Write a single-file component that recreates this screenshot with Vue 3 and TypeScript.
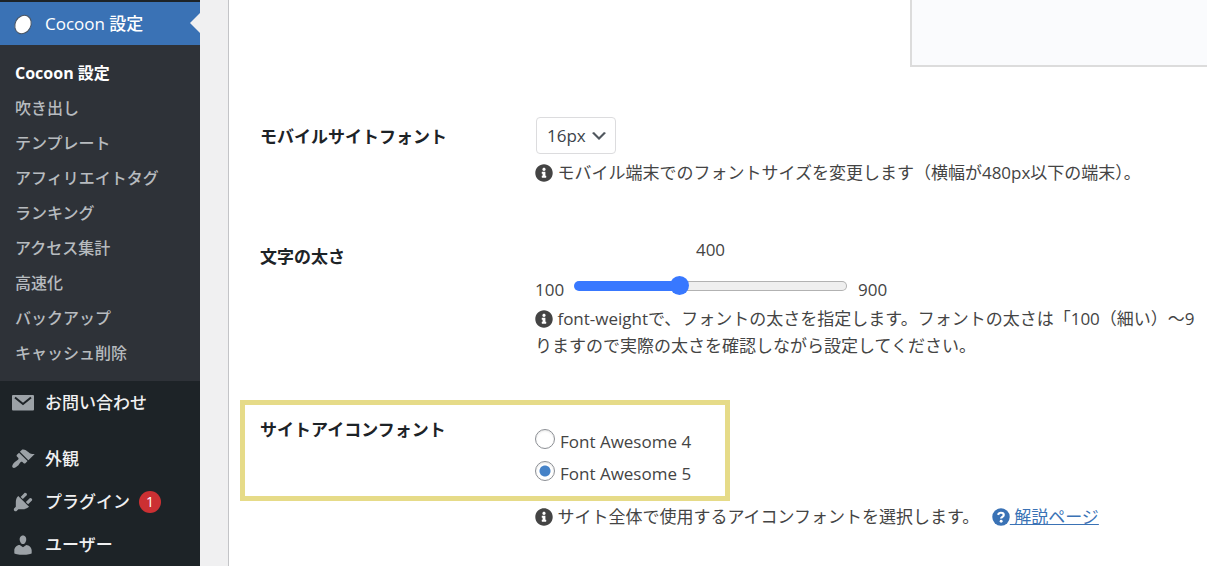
<script setup lang="ts">
import { computed, ref } from 'vue'

const submenu: string[] = [
  'Cocoon 設定',
  '吹き出し',
  'テンプレート',
  'アフィリエイトタグ',
  'ランキング',
  'アクセス集計',
  '高速化',
  'バックアップ',
  'キャッシュ削除',
]

const infoPath =
  'M256 8C119 8 8 119 8 256c0 137 111 248 248 248s248-111 248-248C504 119 393 8 256 8zm0 98c26 0 46 20 46 46s-20 46-46 46-46-20-46-46 20-46 46-46zm64 274c0 7-5 12-12 12H204c-7 0-12-5-12-12v-34c0-7 5-12 12-12h12v-54h-12c-7 0-12-5-12-12v-34c0-7 5-12 12-12h80c7 0 12 5 12 12v100h12c7 0 12 5 12 12z'

const fontSize = ref('16px')
const weight = ref(400)
const iconFont = ref('5')
const fill = computed(() => `${((weight.value - 100) / 800) * 100}%`)
</script>

<template>
  <div class="admin">
    <nav class="sidebar">
      <a class="item current" href="#cocoon">
        <svg class="icon" viewBox="0 0 24 24" aria-hidden="true">
          <ellipse cx="12" cy="12.5" rx="7.8" ry="9.6" transform="rotate(28 12 12.5)" fill="#fff" stroke="#4a5563" stroke-width="1" />
        </svg>
        <span>Cocoon 設定</span>
      </a>
      <ul class="submenu">
        <li v-for="(name, i) in submenu" :key="name">
          <a href="#sub" :class="{ active: i === 0 }">{{ name }}</a>
        </li>
      </ul>
      <a class="item" href="#contact">
        <svg class="icon" viewBox="0 0 24 24" aria-hidden="true">
          <rect x="1" y="4" width="22" height="15.5" rx="1" fill="#9ca2a7" />
          <path d="M4 6.500 12 13l8-6.500" fill="none" stroke="#1d2327" stroke-width="2" />
        </svg>
        <span>お問い合わせ</span>
      </a>
      <a class="item separated" href="#appearance">
        <svg class="icon" viewBox="0 0 20 20" aria-hidden="true">
          <path fill="#9ca2a7" d="M14.480 11.060 7.410 3.990l1.500-1.500c.5-.56 2.300-.47 3.510.32 1.210.8 1.430 1.280 2.910 2.100 1.180.64 2.450 1.260 4.450.85zm-.71.710L6.700 4.700 4.930 6.470c-.39.39-.39 1.020 0 1.410l1.060 1.060c.39.39.39 1.030 0 1.420-.6.600-1.430 1.110-2.210 1.690-.35.26-.7.530-1.010.840C1.430 14.230.4 16.080 1.400 17.070c.99 1 2.840-.030 4.180-1.360.31-.31.58-.66.850-1.020.57-.78 1.080-1.610 1.690-2.210.39-.39 1.020-.39 1.410 0l1.060 1.060c.39.39 1.020.39 1.410 0z" />
        </svg>
        <span>外観</span>
      </a>
      <a class="item" href="#plugins">
        <svg class="icon" viewBox="0 0 20 20" aria-hidden="true">
          <path fill="#9ca2a7" d="M13.110 4.360 9.870 7.600 8 5.730l3.240-3.240c.35-.34 1.050-.2 1.560.32.520.51.660 1.210.310 1.550zm-8 1.770.91-1.120 9.010 9.010-1.190.84c-.71.71-2.630 1.160-3.820 1.160H6.140L4.900 17.260c-.59.59-1.540.59-2.120 0-.59-.58-.59-1.530 0-2.120l1.240-1.240v-3.880c0-1.130.4-3.190 1.090-3.890zm7.260 3.970 3.240-3.240c.34-.35 1.040-.21 1.550.31.520.51.660 1.210.310 1.550l-3.240 3.250z" />
        </svg>
        <span>プラグイン</span>
        <span class="badge">1</span>
      </a>
      <a class="item" href="#users">
        <svg class="icon" viewBox="0 0 20 20" aria-hidden="true">
          <path fill="#9ca2a7" d="M10 9.250c-2.270 0-2.730-3.440-2.730-3.440C7 4.020 7.820 2 9.970 2c2.160 0 2.980 2.020 2.710 3.810 0 0-.41 3.440-2.680 3.440zm0 2.570L12.720 10c2.390 0 4.520 2.330 4.520 4.530v2.490s-3.650 1.130-7.240 1.130c-3.650 0-7.240-1.130-7.240-1.130v-2.490c0-2.250 1.940-4.480 4.470-4.480z" />
        </svg>
        <span>ユーザー</span>
      </a>
    </nav>

    <main class="panel">
      <div class="preview"></div>

      <section class="row">
        <label class="heading" for="font-size">モバイルサイトフォント</label>
        <div class="field">
          <span class="select">
            <select id="font-size" v-model="fontSize">
              <option>16px</option>
            </select>
            <svg viewBox="0 0 20 20" aria-hidden="true">
              <path d="m5 6 5 5 5-5 2 1-7 7-7-7z" fill="#50575e" />
            </svg>
          </span>
          <p class="tip">
            <svg class="mark" viewBox="0 0 512 512" aria-hidden="true">
              <path fill="currentColor" :d="infoPath" />
            </svg>
            モバイル端末でのフォントサイズを変更します（横幅が480px以下の端末）。
          </p>
        </div>
      </section>

      <section class="row">
        <label class="heading" for="weight">文字の太さ</label>
        <div class="field">
          <div class="slider">
            <output for="weight">{{ weight }}</output>
            <span>100</span>
            <input id="weight" v-model.number="weight" type="range" min="100" max="900" step="100" :style="{ '--fill': fill }" />
            <span>900</span>
          </div>
          <p class="tip">
            <svg class="mark" viewBox="0 0 512 512" aria-hidden="true">
              <path fill="currentColor" :d="infoPath" />
            </svg>
            font-weightで、フォントの太さを指定します。フォントの太さは「100（細い）～9<br />りますので実際の太さを確認しながら設定してください。
          </p>
        </div>
      </section>

      <section class="row" role="radiogroup" aria-labelledby="icon-font">
        <span class="highlight"></span>
        <span id="icon-font" class="heading">サイトアイコンフォント</span>
        <div class="field">
          <div class="radios">
            <label><input v-model="iconFont" type="radio" name="icon-font" value="4" />Font Awesome 4</label>
            <label><input v-model="iconFont" type="radio" name="icon-font" value="5" />Font Awesome 5</label>
          </div>
          <p class="tip">
            <svg class="mark" viewBox="0 0 512 512" aria-hidden="true">
              <path fill="currentColor" :d="infoPath" />
            </svg>
            サイト全体で使用するアイコンフォントを選択します。
            <a class="help" href="#help"><svg class="mark" viewBox="0 0 512 512" aria-hidden="true">
              <circle cx="256" cy="256" r="248" fill="currentColor" />
              <path d="M172 196c14-42 42-60 82-60 48 0 80 26 80 62 0 54-76 54-76 104" fill="none" stroke="#fff" stroke-width="62" />
              <circle cx="260" cy="376" r="42" fill="#fff" />
            </svg> 解説ページ</a>
          </p>
        </div>
      </section>
    </main>
  </div>
</template>

<style>
body {
  margin: 0;
  background: #f0f0f1;
}
</style>

<style scoped>
.admin {
  display: flex;
  min-height: 100vh;
  overflow: hidden;
  color: #444;
  font-family: "Open Sans", "Noto Sans CJK JP", sans-serif;
  font-size: 17px;
  line-height: 27px;
}
.sidebar {
  flex: 0 0 200px;
  box-sizing: border-box;
  padding-top: 2px;
  background: #1d2327;
}
.item {
  position: relative;
  display: flex;
  align-items: center;
  height: 43px;
  padding-left: 11px;
  color: #f0f0f1;
  font-weight: 500;
  text-decoration: none;
}
.item.current {
  background: #3a72b5;
  color: #fff;
}
.item.current::after {
  content: "";
  position: absolute;
  right: 0;
  top: 11px;
  border: 10px solid transparent;
  border-left: 0;
  border-right-color: #f0f0f1;
}
.item.separated {
  margin-top: 13px;
}
.icon {
  width: 24px;
  height: 24px;
  margin-right: 10px;
}
.badge {
  width: 22px;
  margin-left: 9px;
  border-radius: 11px;
  background: #cc3033;
  color: #fff;
  font-size: 14px;
  font-weight: 400;
  line-height: 22px;
  text-align: center;
}
.submenu {
  margin: 0;
  padding: 11px 0 10px 15px;
  background: #2e3238;
  list-style: none;
  font-size: 16px;
  font-weight: 500;
  line-height: 35px;
}
.submenu a {
  color: #b7bbbf;
  text-decoration: none;
}
.submenu .active {
  color: #fff;
  font-weight: 700;
}
.panel {
  flex: 1;
  min-width: 0;
  margin-left: 28px;
  padding-left: 31px;
  border-left: 1px solid #c3c4c7;
  background: #fff;
}
.preview {
  box-sizing: border-box;
  height: 67px;
  margin: 0 0 49px 650px;
  border: 2px solid #dcdcdc;
  border-width: 0 0 2px 2px;
  background: #fafbfd;
}
.row {
  position: relative;
  display: grid;
  grid-template-columns: 275px 1fr;
  margin-bottom: 50px;
}
.heading {
  padding-top: 7px;
  color: #1d2327;
  font-weight: 700;
}
.field {
  min-width: 0;
}
.select {
  position: relative;
  display: block;
  width: 80px;
  margin: 1px 0 5px 1px;
}
.select select {
  display: block;
  box-sizing: border-box;
  width: 100%;
  height: 37px;
  padding: 0 0 0 10px;
  border: 1px solid #dcdcde;
  border-radius: 4px;
  appearance: none;
  background: #fff;
  color: #3c434a;
  font: inherit;
}
.select svg {
  position: absolute;
  right: 7px;
  top: 9px;
  width: 20px;
  height: 20px;
  pointer-events: none;
}
.tip {
  margin: 0;
  white-space: nowrap;
}
.mark {
  width: 18px;
  height: 18px;
  vertical-align: -3px;
}
.slider {
  display: grid;
  grid-template-columns: 28px 273px auto;
  column-gap: 11px;
  row-gap: 13px;
  padding-bottom: 2px;
}
.slider output {
  grid-column: 2;
  text-align: center;
}
.slider span:first-of-type {
  grid-column: 1;
}
.slider input {
  width: 100%;
  height: 20px;
  margin: 0;
  appearance: none;
  background: transparent;
}
.slider input::-webkit-slider-runnable-track {
  box-sizing: border-box;
  height: 10px;
  border: 1px solid transparent;
  border-radius: 5px;
  background:
    linear-gradient(to right, #3878ff var(--fill), #efefef var(--fill)) padding-box,
    linear-gradient(to right, #3878ff var(--fill), #b2b2b2 var(--fill)) border-box;
}
.slider input::-webkit-slider-thumb {
  width: 19px;
  height: 19px;
  margin-top: -6px;
  border-radius: 50%;
  appearance: none;
  background: #3878ff;
}
.radios {
  padding: 16px 0 14px;
}
.radios label {
  display: flex;
  align-items: center;
  gap: 5px;
  height: 32px;
}
.radios input {
  box-sizing: border-box;
  width: 20px;
  height: 20px;
  margin: 0 0 4px;
  border: 1px solid #8c8f94;
  border-radius: 50%;
  appearance: none;
  background: #fff;
  box-shadow: inset 0 1px 2px rgba(0, 0, 0, 0.1);
}
.radios input:checked {
  background: radial-gradient(circle, #4582c7 5px, #fff 6px);
}
.highlight {
  position: absolute;
  left: -20px;
  top: -9px;
  box-sizing: border-box;
  width: 490px;
  height: 101px;
  border: 5px solid #e6db88;
  pointer-events: none;
}
.help {
  margin-left: 8px;
  color: #3a72b5;
}
</style>
